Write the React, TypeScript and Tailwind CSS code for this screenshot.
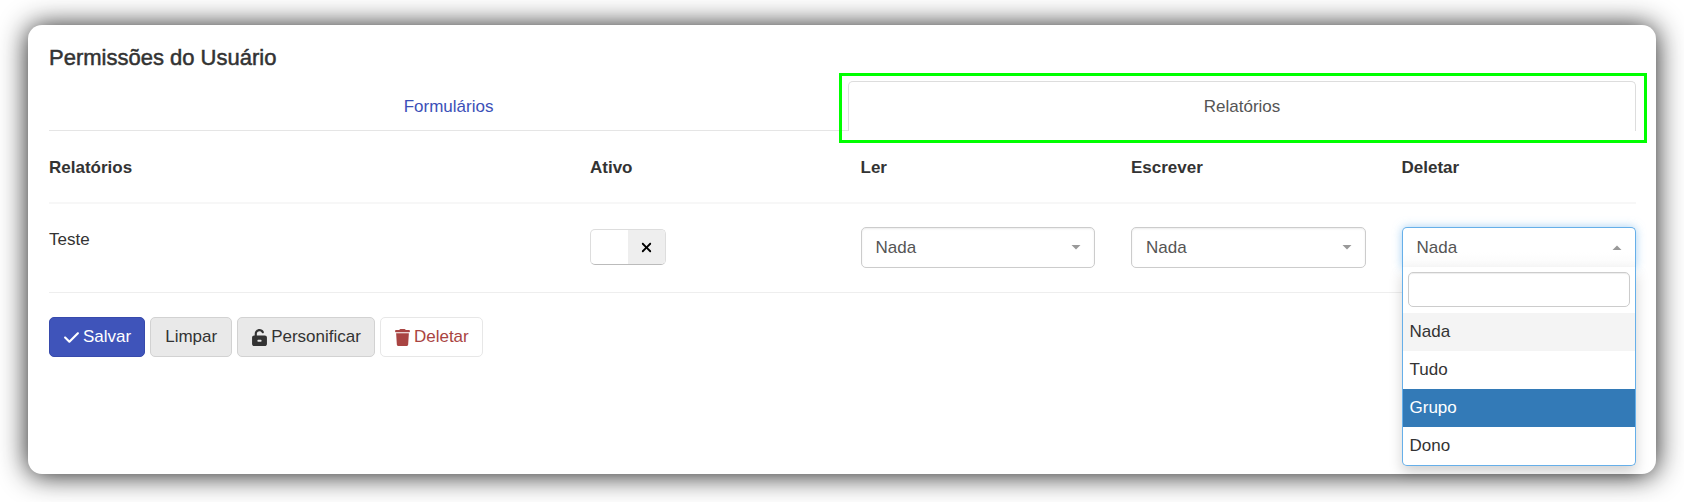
import React, { useState } from 'react';
import { FaCheck, FaTrash, FaUnlockKeyhole, FaXmark } from 'react-icons/fa6';

const TABS = ['Formulários', 'Relatórios'];
const ACTIONS = ['Ler', 'Escrever', 'Deletar'];
const LEVELS = ['Nada', 'Tudo', 'Grupo', 'Dono'];

function Caret({ open = false }: { open?: boolean }) {
  return (
    <svg
      viewBox="0 0 10 5"
      className="pointer-events-none absolute top-[18px] right-[14px] h-[5px] w-[10px] fill-[#999]"
      aria-hidden="true"
    >
      {open ? <path d="M.5 5h9L5 .5z" /> : <path d="M.5 0h9L5 4.5z" />}
    </svg>
  );
}

interface LevelSelectProps {
  label: string;
  value: string;
  onChange: (value: string) => void;
}

function LevelSelect({ label, value, onChange }: LevelSelectProps) {
  return (
    <div className="relative">
      <select
        aria-label={label}
        value={value}
        onChange={(e) => onChange(e.target.value)}
        className="block h-[41px] w-full appearance-none rounded-[5px] border border-[#ccc] bg-white px-[14px] text-[#555] shadow-[inset_0_1px_2px_rgba(0,0,0,0.08)]"
      >
        {LEVELS.map((level) => (
          <option key={level}>{level}</option>
        ))}
      </select>
      <Caret />
    </div>
  );
}

function OpenLevelSelect({ label, value, onChange }: LevelSelectProps) {
  const [search, setSearch] = useState('');
  const [highlighted, setHighlighted] = useState('Grupo');

  const visible = LEVELS.filter((level) => level.toLowerCase().includes(search.toLowerCase()));

  return (
    <div className="relative">
      <select
        aria-label={label}
        value={value}
        onChange={(e) => onChange(e.target.value)}
        className="block h-[41px] w-full appearance-none rounded-t-[5px] border border-b-0 border-[#66afe9] bg-white bg-linear-to-b from-white from-60% to-[#fafafa] px-[14px] text-[#555] shadow-[0_0_10px_rgba(102,175,233,0.6)]"
      >
        {LEVELS.map((level) => (
          <option key={level}>{level}</option>
        ))}
      </select>
      <Caret open />

      {/* Dropdown panel */}
      <div className="absolute inset-x-0 top-10 z-10 rounded-b-[5px] border border-t-0 border-[#66afe9] bg-white shadow-[0_7px_14px_rgba(0,0,0,0.175)]">
        <div className="px-[5px] pt-[5px] pb-[6px]">
          <input
            type="search"
            aria-label="Buscar"
            value={search}
            onChange={(e) => setSearch(e.target.value)}
            className="block h-[35px] w-full rounded-[5px] border border-[#ccc] px-2 shadow-[inset_0_1px_1px_rgba(0,0,0,0.075)] outline-none"
          />
        </div>
        <ul role="listbox" aria-label={label} className="overflow-hidden rounded-b-[4px]">
          {visible.map((level) => (
            <li
              key={level}
              role="option"
              aria-selected={level === value}
              onMouseEnter={() => setHighlighted(level)}
              onClick={() => onChange(level)}
              className={
                level === highlighted
                  ? 'bg-[#337ab7] px-[7px] py-[7px] text-white'
                  : level === value
                    ? 'bg-[#f4f4f4] px-[7px] py-[7px]'
                    : 'px-[7px] py-[7px]'
              }
            >
              {level}
            </li>
          ))}
        </ul>
      </div>
    </div>
  );
}

export default function App() {
  const [levels, setLevels] = useState<Record<string, string>>({
    Ler: 'Nada',
    Escrever: 'Nada',
    Deletar: 'Nada',
  });
  const [active, setActive] = useState(false);

  const setLevel = (action: string) => (value: string) =>
    setLevels((prev) => ({ ...prev, [action]: value }));

  return (
    <div className="flex min-h-screen bg-white px-7 pt-[25px] pb-7 font-['Liberation_Sans',Arial,sans-serif] text-[17px] leading-6 text-[#333]">
      <main className="min-w-0 flex-1 rounded-[14px] bg-white pt-[19px] pr-5 pb-8 pl-[21px] shadow-[0_1px_28px_rgba(0,0,0,0.9)]">
        <h1 className="mb-[9px] text-[22px] leading-7 [-webkit-text-stroke:0.5px_#333]">
          Permissões do Usuário
        </h1>

        <nav className="flex text-center">
          <a href="#formularios" className="flex-auto border-b border-[#e5e5e5] pt-[14px] pb-[11px] text-[#3c50b8]">
            {TABS[0]}
          </a>
          <a
            href="#relatorios"
            aria-current="page"
            className="relative flex-auto rounded-t-[5px] border border-b-0 border-[#ddd] pt-[13px] pb-3 text-[#555]"
          >
            {TABS[1]}
            {/* Highlight frame around the current tab */}
            <span className="pointer-events-none absolute -top-[9px] -right-3 -bottom-3 -left-[10px] border-3 border-[#00ff00]" />
          </a>
        </nav>

        <table className="block w-full text-left">
          <thead className="block">
            <tr className="grid grid-cols-6 gap-x-9 border-b-2 border-[#f7f7f7] pt-[25px] pb-[22px]">
              <th className="col-span-2">Relatórios</th>
              <th>Ativo</th>
              {ACTIONS.map((action) => (
                <th key={action}>{action}</th>
              ))}
            </tr>
          </thead>
          <tbody className="block">
            <tr className="grid grid-cols-6 gap-x-9 border-b border-[#eee] pt-[23px] pb-6">
              <td className="col-span-2 pt-px">Teste</td>
              <td>
                <label className="mt-[2px] flex h-9 w-[76px] cursor-pointer overflow-hidden rounded-[5px] border border-[#ddd] border-b-[#bbb] bg-white">
                  <input
                    type="checkbox"
                    aria-label="Ativo"
                    checked={active}
                    onChange={(e) => setActive(e.target.checked)}
                    className="peer sr-only"
                  />
                  <span className="ml-auto flex w-[37px] items-center justify-center bg-[#eee] text-black peer-checked:ml-0">
                    <FaXmark className="size-[15px]" />
                  </span>
                </label>
              </td>
              <td>
                <LevelSelect label="Ler" value={levels.Ler} onChange={setLevel('Ler')} />
              </td>
              <td>
                <LevelSelect label="Escrever" value={levels.Escrever} onChange={setLevel('Escrever')} />
              </td>
              <td>
                <OpenLevelSelect label="Deletar" value={levels.Deletar} onChange={setLevel('Deletar')} />
              </td>
            </tr>
          </tbody>
        </table>

        <div className="mt-6 flex flex-wrap gap-[5px]">
          <button className="flex h-10 items-center gap-1 rounded-[5px] border border-[#374aac] bg-[#3f54ba] pr-[13px] pl-[14px] text-white">
            <FaCheck className="h-[17px] w-[15px]" />
            Salvar
          </button>
          <button className="flex h-10 items-center rounded-[5px] border border-[#d2d2d2] bg-[#e9e9e9] px-[14px]">
            Limpar
          </button>
          <button className="flex h-10 items-center gap-1 rounded-[5px] border border-[#d2d2d2] bg-[#e9e9e9] pr-[13px] pl-[14px]">
            <FaUnlockKeyhole className="h-[17px] w-[15px]" />
            Personificar
          </button>
          <button className="flex h-10 items-center gap-1 rounded-[5px] border border-[#e7e7e7] bg-white pr-[13px] pl-[14px] text-[#a94442]">
            <FaTrash className="h-[17px] w-[15px]" />
            Deletar
          </button>
        </div>
      </main>
    </div>
  );
}
